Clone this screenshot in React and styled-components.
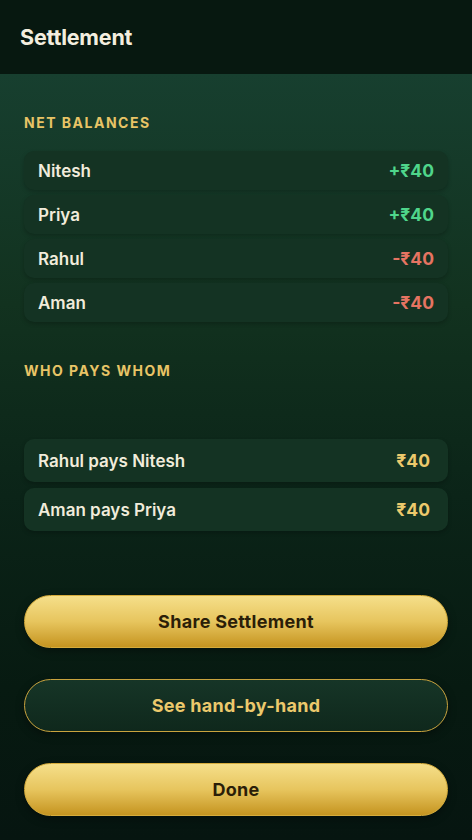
import React from 'react';
import styled, {createGlobalStyle} from 'styled-components';

const GlobalStyle = createGlobalStyle`
  html, body {
    margin: 0;
    padding: 0;
    background: #061510;
  }
  body {
    font-family: Inter, "Noto Sans", "Liberation Sans", sans-serif;
    -webkit-font-smoothing: antialiased;
  }
`

const Screen = styled.div`
  width: 472px;
  min-height: 840px;
  display: flex;
  flex-direction: column;
`

const Header = styled.header`
  height: 74px;
  background: #071810;
  display: flex;
  align-items: center;
  padding: 0 20px;
  box-sizing: border-box;
`

const Title = styled.h1`
  margin: 0;
  font-size: 21.5px;
  font-weight: 700;
  color: #f3eedf;
  letter-spacing: -0.2px;
`

const Body = styled.main`
  flex: 1;
  padding: 40px 24px 24px;
  background: linear-gradient(180deg, #173f2f 0%, #12321f 30%, #0b2418 55%, #071a11 80%, #061510 100%);
  display: flex;
  flex-direction: column;
`

const SectionLabel = styled.h2`
  margin: 0 0 ${p => p.$gap}px;
  font-size: 14px;
  line-height: 17px;
  font-weight: 700;
  letter-spacing: 1.5px;
  color: #e8c466;
`

const List = styled.div`
  display: flex;
  flex-direction: column;
  gap: ${p => p.$gap}px;
  margin-bottom: ${p => p.$after}px;
`

const Row = styled.div`
  height: ${p => p.$h}px;
  display: flex;
  align-items: center;
  justify-content: space-between;
  padding: 0 ${p => p.$pr}px 0 14px;
  background: #143323;
  border-radius: 10px;
  box-shadow: 0 2px 4px rgba(0, 0, 0, 0.22);
`

const Name = styled.span`
  font-size: 17px;
  font-weight: 600;
  color: #f1ecdb;
`

const Amount = styled.span`
  font-size: 17.5px;
  font-weight: 700;
  color: ${p => p.$color};
`

const Buttons = styled.div`
  display: flex;
  flex-direction: column;
  gap: 31px;
`

const Button = styled.button`
  height: 53px;
  width: 100%;
  border-radius: 27px;
  font-family: inherit;
  font-size: 18px;
  font-weight: 700;
  letter-spacing: 0.3px;
  cursor: pointer;
  border: 1px solid ${p => (p.$ghost ? '#c9a33e' : '#d6ac3c')};
  color: ${p => (p.$ghost ? '#ecc96c' : '#2b1e08')};
  background: ${p =>
    p.$ghost
      ? 'linear-gradient(180deg, #163527 0%, #0f281c 100%)'
      : 'linear-gradient(180deg, #f5df8a 0%, #e7c55e 50%, #c59420 100%)'};
  box-shadow: 0 3px 8px rgba(0, 0, 0, 0.35);
`

const balances = [
  {name: 'Nitesh', amount: '+₹40', color: '#4fd68b'},
  {name: 'Priya', amount: '+₹40', color: '#4fd68b'},
  {name: 'Rahul', amount: '-₹40', color: '#e57462'},
  {name: 'Aman', amount: '-₹40', color: '#e57462'},
];

const payments = [
  {text: 'Rahul pays Nitesh', amount: '₹40'},
  {text: 'Aman pays Priya', amount: '₹40'},
];

export default function App() {
  return (
    <Screen>
      <GlobalStyle />
      <Header>
        <Title>Settlement</Title>
      </Header>
      <Body>
        <SectionLabel $gap={20}>NET BALANCES</SectionLabel>
        <List $gap={5} $after={40}>
          {balances.map(b => (
            <Row key={b.name} $h={39} $pr={14}>
              <Name>{b.name}</Name>
              <Amount $color={b.color}>{b.amount}</Amount>
            </Row>
          ))}
        </List>
        <SectionLabel $gap={60}>WHO PAYS WHOM</SectionLabel>
        <List $gap={6} $after={64}>
          {payments.map(p => (
            <Row key={p.text} $h={43} $pr={18}>
              <Name>{p.text}</Name>
              <Amount $color="#ecc96c">{p.amount}</Amount>
            </Row>
          ))}
        </List>
        <Buttons>
          <Button>Share Settlement</Button>
          <Button $ghost>See hand-by-hand</Button>
          <Button>Done</Button>
        </Buttons>
      </Body>
    </Screen>
  );
}
